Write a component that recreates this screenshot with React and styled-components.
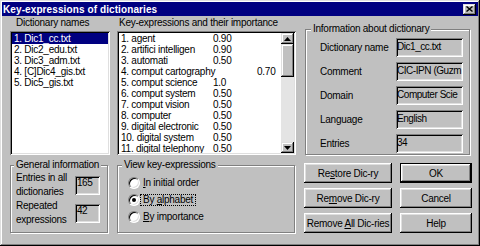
import React from "react";
import styled, { createGlobalStyle } from "styled-components";

const GlobalStyle = createGlobalStyle`
  body {
    margin: 0;
    background: #c0c0c0;
  }
  * {
    box-sizing: border-box;
  }
`;

const raised = `
  box-shadow: inset -1px -1px #000, inset 1px 1px #dfdfdf,
    inset -2px -2px #808080, inset 2px 2px #fff;
`;
const sunken = `
  box-shadow: inset 1px 1px #808080, inset -1px -1px #fff,
    inset 2px 2px #000, inset -2px -2px #dfdfdf;
`;

const Window = styled.div`
  width: 480px;
  height: 246px;
  padding: 2px;
  background: #c0c0c0;
  ${raised}
  font-family: "Liberation Sans", Arial, sans-serif;
  font-size: 10px;
  letter-spacing: -0.25px;
  color: #000;
  display: flex;
  flex-direction: column;
`;

const TitleBar = styled.div`
  height: 14px;
  background: #000080;
  color: #fff;
  font-weight: bold;
  display: flex;
  align-items: center;
  justify-content: space-between;
  padding: 0 2px 0 1px;
  letter-spacing: 0.1px;
`;

const CloseButton = styled.div`
  width: 13px;
  height: 11px;
  background: #c0c0c0;
  ${raised}
  display: flex;
  align-items: center;
  justify-content: center;
`;

const Body = styled.div`
  display: grid;
  grid-template-columns: 100px 180px 168px;
  grid-template-rows: 138px 74px;
  column-gap: 7px;
  row-gap: 4px;
  padding: 1px 0 0 8px;
`;

const Column = styled.div`
  display: flex;
  flex-direction: column;
`;

const Caption = styled.div`
  height: 14px;
  line-height: 12px;
  padding-left: ${({ $indent }) => $indent}px;
  white-space: nowrap;
`;

const ListBox = styled.div`
  height: 124px;
  width: ${({ $width }) => $width}px;
  background: #fff;
  padding: 2px;
  ${sunken}
  display: flex;
`;

const Items = styled.div`
  flex: 1;
  display: flex;
  flex-direction: column;
  overflow: hidden;
`;

const DictItem = styled.div`
  height: 11px;
  line-height: 11px;
  padding-left: 2px;
  white-space: nowrap;
  background: ${({ $active }) => ($active ? "#000080" : "transparent")};
  color: ${({ $active }) => ($active ? "#fff" : "#000")};
`;

const KeyRow = styled.div`
  height: 11px;
  line-height: 11px;
  padding-left: 2px;
  display: flex;
  white-space: nowrap;
`;

const KeyName = styled.span`
  min-width: ${({ $far }) => ($far ? 136 : 92)}px;
`;

const ScrollBar = styled.div`
  width: 13px;
  display: flex;
  flex-direction: column;
  background: #e4e4e4;
`;

const ScrollButton = styled.div`
  height: 11px;
  background: #c0c0c0;
  ${raised}
  display: flex;
  align-items: center;
  justify-content: center;
`;

const Thumb = styled.div`
  height: 33px;
  background: #c0c0c0;
  ${raised}
`;

const Track = styled.div`
  flex: 1;
`;

const Group = styled.fieldset`
  margin: ${({ $margin }) => $margin || 0};
  padding: 0;
  min-width: 0;
  height: ${({ $height }) => $height}px;
  border: 1px solid #808080;
  box-shadow: inset 1px 1px #fff, 1px 1px #fff;
`;

const Legend = styled.legend`
  margin-left: ${({ $indent }) => $indent}px;
  padding: 0 2px;
  line-height: 12px;
  background: #c0c0c0;
  white-space: nowrap;
`;

const InfoBody = styled.div`
  padding: 3px 0 0 14px;
  display: flex;
  flex-direction: column;
  gap: 5px;
`;

const InfoRow = styled.div`
  display: flex;
  align-items: center;
  height: 19px;
`;

const InfoLabel = styled.span`
  width: 76px;
  white-space: nowrap;
`;

const Field = styled.div`
  width: ${({ $width }) => $width}px;
  height: 19px;
  padding: ${({ $top }) => ($top ? "1px 1px 0 2px" : "3px 1px 0 1px")};
  line-height: 12px;
  letter-spacing: -0.45px;
  background: #c0c0c0;
  ${sunken}
  white-space: nowrap;
  overflow: hidden;
`;

const GeneralBody = styled.div`
  padding: 0 0 0 5px;
  display: flex;
  flex-direction: column;
`;

const GeneralRow = styled.div`
  display: flex;
  align-items: flex-start;
`;

const GeneralLabel = styled.div`
  width: 59px;
  line-height: 14px;
`;

const GeneralField = styled(Field)`
  margin-top: 5px;
`;

const RadioList = styled.div`
  padding: 3px 0 0 10px;
  display: flex;
  flex-direction: column;
`;

const RadioRow = styled.div`
  height: 17px;
  display: flex;
  align-items: center;
`;

const RadioCircle = styled.span`
  width: 12px;
  height: 12px;
  border-radius: 50%;
  background: #fff;
  border: 1px solid;
  border-color: #808080 #fff #fff #808080;
  box-shadow: inset 1px 1px #000, inset -1px -1px #dfdfdf;
  display: flex;
  align-items: center;
  justify-content: center;
  &::after {
    content: "";
    width: 4px;
    height: 4px;
    border-radius: 50%;
    background: ${({ $checked }) => ($checked ? "#000" : "transparent")};
  }
`;

const RadioText = styled.span`
  padding: 0 2px;
  line-height: 10px;
  border: 1px dotted ${({ $focus }) => ($focus ? "#000" : "transparent")};
`;

const Buttons = styled.div`
  margin-top: 4px;
  display: grid;
  grid-template-columns: 88px 72px;
  grid-auto-rows: 20px;
  column-gap: 8px;
  row-gap: 5px;
`;

const Button = styled.div`
  background: #c0c0c0;
  display: flex;
  align-items: center;
  justify-content: center;
  white-space: nowrap;
  box-shadow: ${({ $default }) =>
    $default
      ? "inset 0 0 0 1px #000, inset -2px -2px #000, inset 2px 2px #fff, inset -3px -3px #808080, inset 3px 3px #dfdfdf"
      : "inset -1px -1px #000, inset 1px 1px #fff, inset -2px -2px #808080, inset 2px 2px #dfdfdf"};
`;

const dictionaries = [
  "1. Dic1_cc.txt",
  "2. Dic2_edu.txt",
  "3. Dic3_adm.txt",
  "4. [C]Dic4_gis.txt",
  "5. Dic5_gis.txt",
];

const expressions = [
  ["1. agent", "0.90"],
  ["2. artifici intelligen", "0.90"],
  ["3. automati", "0.50"],
  ["4. comput cartography", "0.70", true],
  ["5. comput science", "1.0"],
  ["6. comput system", "0.50"],
  ["7. comput vision", "0.50"],
  ["8. computer", "0.50"],
  ["9. digital electronic", "0.50"],
  ["10. digital system", "0.50"],
  ["11. digital telephony", "0.50"],
];

const info = [
  ["Dictionary name", "Dic1_cc.txt"],
  ["Comment", "CIC-IPN (Guzm"],
  ["Domain", "Computer Scie"],
  ["Language", "English"],
  ["Entries", "34"],
];

const Arrow = ({ up }) => (
  <svg width="7" height="4" viewBox="0 0 7 4">
    <polygon points={up ? "3.5,0 7,4 0,4" : "0,0 7,0 3.5,4"} fill="#000" />
  </svg>
);

export default function App() {
  return (
    <>
      <GlobalStyle />
      <Window>
        <TitleBar>
          <span>Key-expressions of dictionaries</span>
          <CloseButton>
            <svg width="7" height="6" viewBox="0 0 7 6">
              <path d="M0.5 0.5 L6.5 5.5 M6.5 0.5 L0.5 5.5" stroke="#000" strokeWidth="1.4" />
            </svg>
          </CloseButton>
        </TitleBar>
        <Body>
          <Column>
            <Caption $indent={6}>Dictionary names</Caption>
            <ListBox $width={100}>
              <Items>
                {dictionaries.map((d, i) => (
                  <DictItem key={d} $active={i === 0}>
                    {d}
                  </DictItem>
                ))}
              </Items>
            </ListBox>
          </Column>

          <Column>
            <Caption $indent={2}>Key-expressions and their importance</Caption>
            <ListBox $width={179}>
              <Items>
                {expressions.map(([name, value, far]) => (
                  <KeyRow key={name}>
                    <KeyName $far={far}>{name}</KeyName>
                    <span>{value}</span>
                  </KeyRow>
                ))}
              </Items>
              <ScrollBar>
                <ScrollButton>
                  <Arrow up />
                </ScrollButton>
                <Thumb />
                <Track />
                <ScrollButton>
                  <Arrow />
                </ScrollButton>
              </ScrollBar>
            </ListBox>
          </Column>

          <Group $margin="6px 2px 0 1px" $height={132}>
            <Legend $indent={5}>Information about dictionary</Legend>
            <InfoBody>
              {info.map(([label, value]) => (
                <InfoRow key={label}>
                  <InfoLabel>{label}</InfoLabel>
                  <Field $width={67}>{value}</Field>
                </InfoRow>
              ))}
            </InfoBody>
          </Group>

          <Group $margin="0 2px 0 0" $height={74}>
            <Legend $indent={3}>General information</Legend>
            <GeneralBody>
              <GeneralRow>
                <GeneralLabel>
                  Entries in all
                  <br />
                  dictionaries
                </GeneralLabel>
                <GeneralField $width={25} $top>
                  165
                </GeneralField>
              </GeneralRow>
              <GeneralRow>
                <GeneralLabel>
                  Repeated
                  <br />
                  expressions
                </GeneralLabel>
                <GeneralField $width={25} $top>
                  42
                </GeneralField>
              </GeneralRow>
            </GeneralBody>
          </Group>

          <Group $margin="0 2px 0 0" $height={74}>
            <Legend $indent={4}>View key-expressions</Legend>
            <RadioList>
              <RadioRow>
                <RadioCircle />
                <RadioText>
                  <u>I</u>n initial order
                </RadioText>
              </RadioRow>
              <RadioRow>
                <RadioCircle $checked />
                <RadioText $focus>
                  By <u>a</u>lphabet
                </RadioText>
              </RadioRow>
              <RadioRow>
                <RadioCircle />
                <RadioText>
                  <u>B</u>y importance
                </RadioText>
              </RadioRow>
            </RadioList>
          </Group>

          <Buttons>
            <Button>
              <span>
                Re<u>s</u>tore Dic-ry
              </span>
            </Button>
            <Button $default>OK</Button>
            <Button>
              <span>
                Re<u>m</u>ove Dic-ry
              </span>
            </Button>
            <Button>Cancel</Button>
            <Button>
              <span>
                Remove <u>A</u>ll Dic-ries
              </span>
            </Button>
            <Button>Help</Button>
          </Buttons>
        </Body>
      </Window>
    </>
  );
}
